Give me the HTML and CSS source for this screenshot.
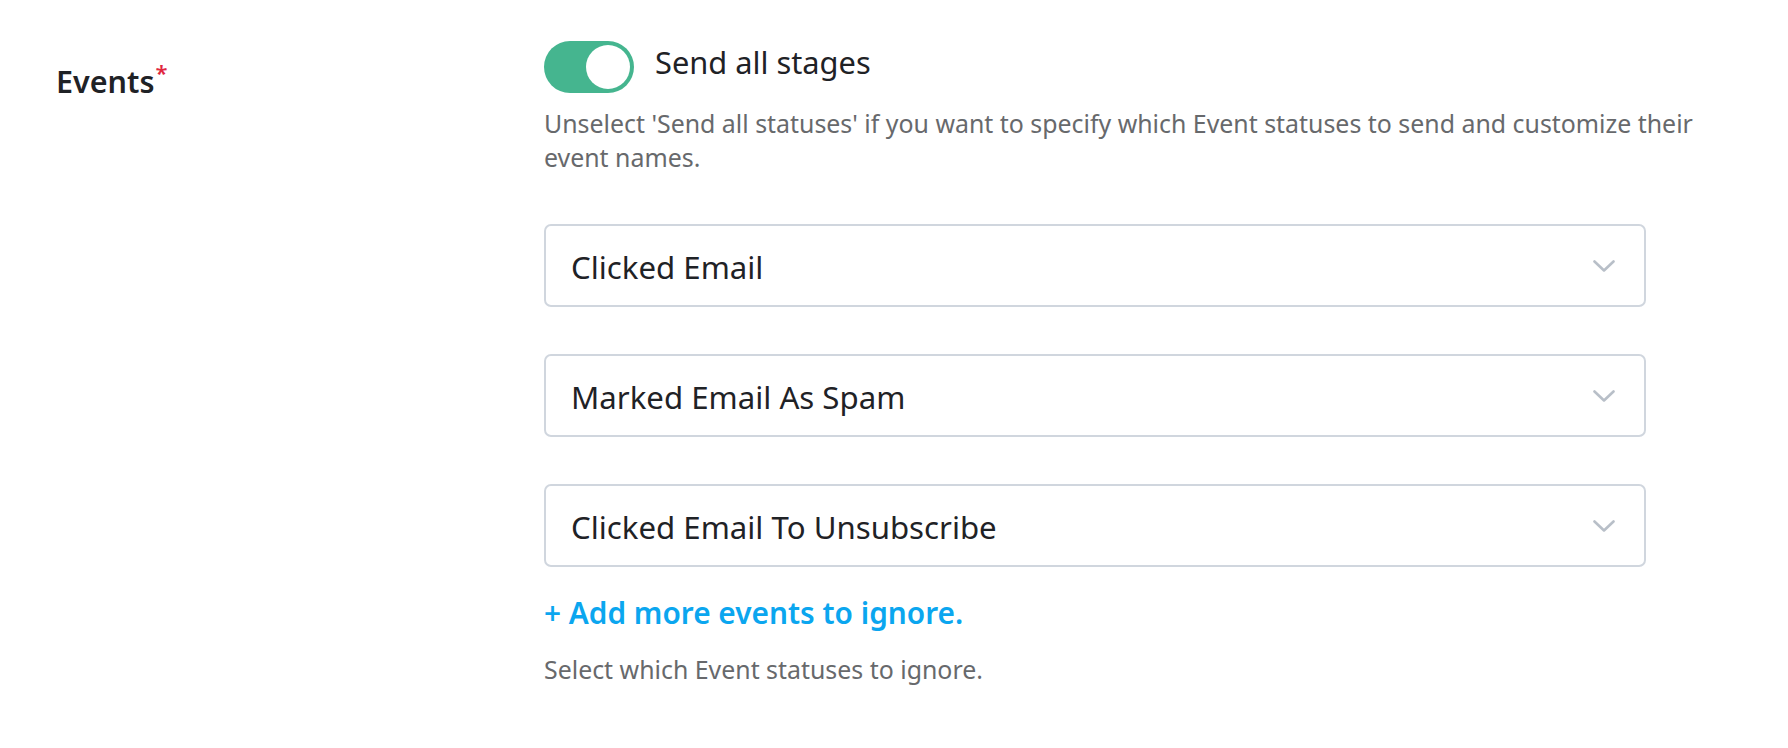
FILE: index.html
```html
<!DOCTYPE html>
<html lang="en">
<head>
<meta charset="utf-8">
<title>Events</title>
<link rel="stylesheet" href="styles.css">
</head>
<body>
<div class="form-row">
  <div class="label-col">
    <span class="label">Events</span><span class="req">*</span>
  </div>
  <div class="field-col">
    <div class="toggle-row">
      <span class="toggle"><span class="knob"></span></span>
      <span class="toggle-label">Send all stages</span>
    </div>
    <p class="help help-top">Unselect 'Send all statuses' if you want to specify which Event statuses to send and customize their event names.</p>
    <div class="selects">
      <div class="select"><span class="select-value">Clicked Email</span><svg class="chevron" width="22" height="12" viewBox="0 0 22 12"><polyline points="1.5,1.5 11,10.5 20.5,1.5" fill="none" stroke="#b8bfc8" stroke-width="2.6" stroke-linecap="round" stroke-linejoin="round"/></svg></div>
      <div class="select"><span class="select-value">Marked Email As Spam</span><svg class="chevron" width="22" height="12" viewBox="0 0 22 12"><polyline points="1.5,1.5 11,10.5 20.5,1.5" fill="none" stroke="#b8bfc8" stroke-width="2.6" stroke-linecap="round" stroke-linejoin="round"/></svg></div>
      <div class="select"><span class="select-value">Clicked Email To Unsubscribe</span><svg class="chevron" width="22" height="12" viewBox="0 0 22 12"><polyline points="1.5,1.5 11,10.5 20.5,1.5" fill="none" stroke="#b8bfc8" stroke-width="2.6" stroke-linecap="round" stroke-linejoin="round"/></svg></div>
    </div>
    <a class="add-link" href="#">+ Add more events to ignore.</a>
    <p class="help help-bottom">Select which Event statuses to ignore.</p>
  </div>
</div>
</body>
</html>
```

FILE: styles.css
```css
html, body {
  margin: 0;
  padding: 0;
  background: #ffffff;
}

body {
  font-family: "Noto Sans", "Open Sans", sans-serif;
  color: #1f2226;
}

.form-row {
  display: flex;
  padding-left: 56px;
}

.label-col {
  width: 488px;
  flex: none;
  padding-top: 61px;
}

.label {
  font-size: 30.5px;
  line-height: 40px;
  font-weight: 600;
  color: #1f2226;
}

.req {
  color: #e0283f;
  font-size: 22px;
  font-weight: 600;
  vertical-align: top;
  line-height: 22px;
  margin-left: 1px;
}

.field-col {
  width: 1190px;
  flex: none;
  padding-top: 41px;
}

.toggle-row {
  display: flex;
  align-items: flex-start;
  gap: 21px;
}

.toggle {
  width: 90px;
  height: 52px;
  border-radius: 26px;
  background: #45b58f;
  display: flex;
  align-items: center;
  justify-content: flex-end;
  padding: 0 4px;
  box-sizing: border-box;
  flex: none;
}

.knob {
  width: 44px;
  height: 44px;
  border-radius: 50%;
  background: #ffffff;
}

.toggle-label {
  font-size: 30.8px;
  line-height: 40px;
  margin-top: 1px;
  color: #1f2226;
}

.help {
  margin: 0;
  font-size: 24.9px;
  line-height: 34px;
  color: #67696c;
}

.help-top {
  margin-top: 13px;
}

.selects {
  width: 1102px;
  display: flex;
  flex-direction: column;
  gap: 47px;
  margin-top: 50px;
}

.select {
  height: 83px;
  box-sizing: border-box;
  border: 2px solid #d0d6de;
  border-radius: 7px;
  display: flex;
  align-items: center;
  justify-content: space-between;
  padding: 0 29px 0 25px;
}

.select-value {
  font-size: 31.2px;
  color: #1f2226;
  position: relative;
  top: 1px;
}

.chevron {
  display: block;
  flex: none;
}

.add-link {
  display: inline-block;
  margin-top: 26px;
  font-size: 29.8px;
  line-height: 40px;
  font-weight: 600;
  color: #0ba6ef;
  text-decoration: none;
}

.help-bottom {
  margin-top: 19px;
}
```
